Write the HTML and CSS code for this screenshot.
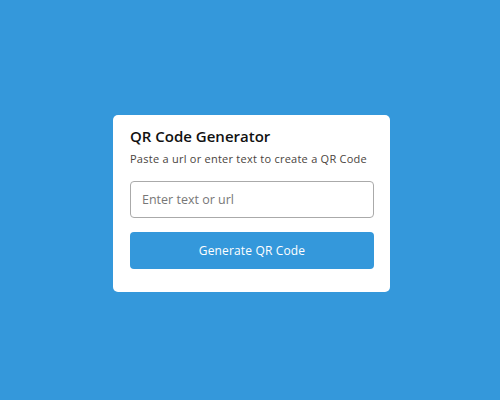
FILE: index.html
```html
<!DOCTYPE html>
<html>
<head>
<meta charset="utf-8">
<link rel="stylesheet" href="styles.css">
</head>
<body>
<div class="card">
  <h1 class="title">QR Code Generator</h1>
  <p class="subtitle">Paste a url or enter text to create a QR Code</p>
  <input class="field" type="text" placeholder="Enter text or url">
  <button class="btn">Generate QR Code</button>
</div>
</body>
</html>
```
FILE: styles.css
```css
html, body {
  margin: 0;
  padding: 0;
}
body {
  background: #3498db;
  height: 400px;
  display: flex;
  align-items: center;
  justify-content: center;
  font-family: "Open Sans", sans-serif;
}
.card {
  box-sizing: border-box;
  width: 277px;
  background: #fff;
  border-radius: 5px;
  padding: 10px 16px 23px 17px;
  display: flex;
  flex-direction: column;
  margin-left: 3px;
  margin-top: 6px;
}
.title {
  margin: 0;
  font-size: 15px;
  font-weight: 600;
  line-height: 22px;
  color: #111;
}
.subtitle {
  margin: 4px 0 0;
  font-size: 11px;
  line-height: 16px;
  letter-spacing: 0.25px;
  color: #4a4440;
}
.field {
  box-sizing: border-box;
  margin-top: 14px;
  height: 37px;
  width: 100%;
  border: 1px solid #aaa;
  border-radius: 4px;
  padding: 0 11px;
  font-family: inherit;
  font-size: 12.5px;
  color: #333;
  outline: none;
}
.field::placeholder {
  color: #777;
}
.btn {
  margin-top: 14px;
  height: 37px;
  width: 100%;
  border: none;
  border-radius: 4px;
  background: #3498db;
  color: #fff;
  font-family: inherit;
  font-size: 12px;
  letter-spacing: 0.15px;
}
```
